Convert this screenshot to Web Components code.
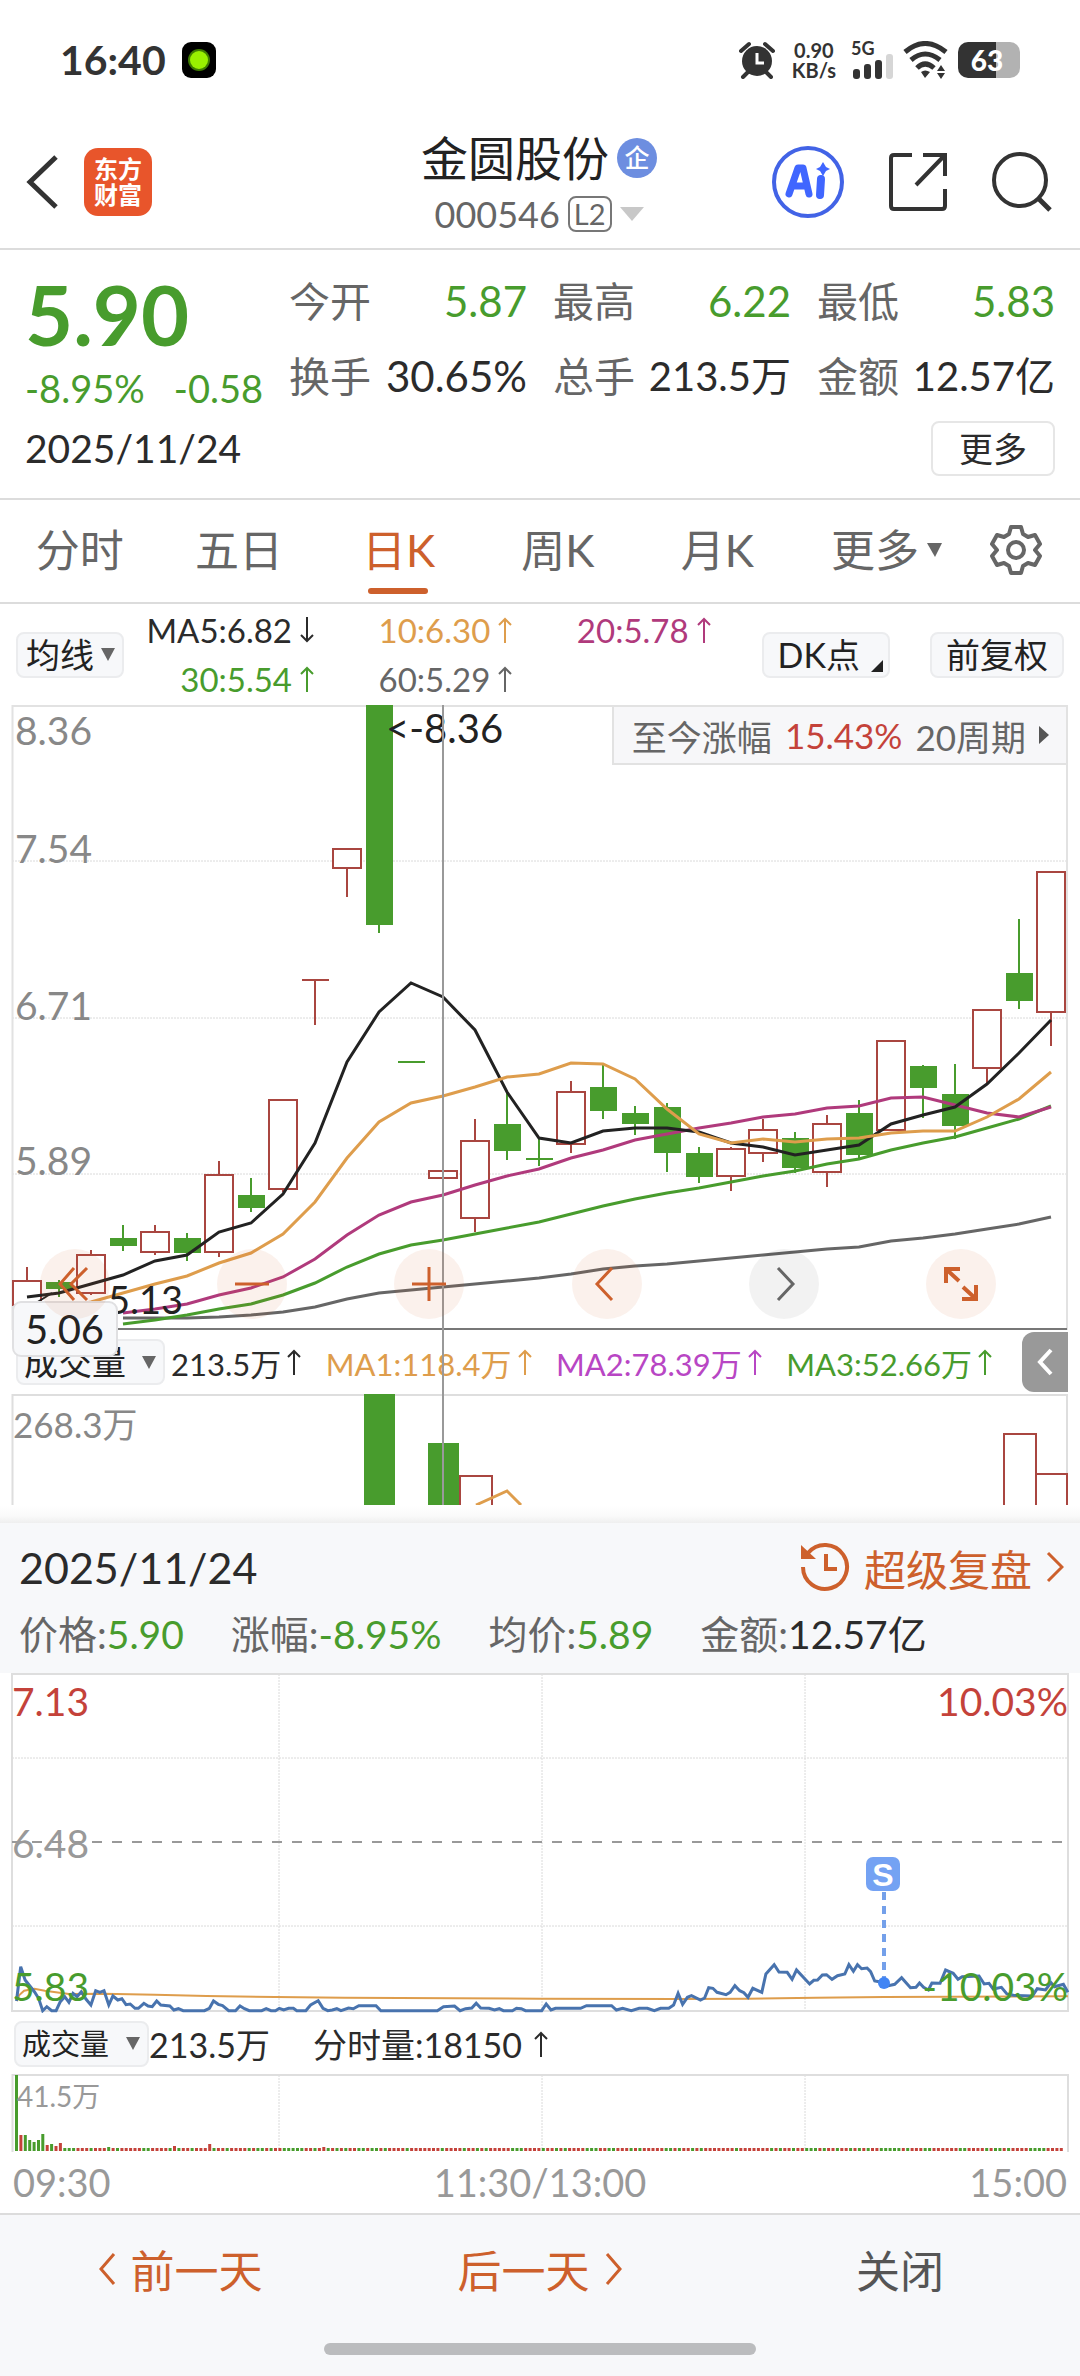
<!DOCTYPE html>
<html lang="zh-CN">
<head>
<meta charset="utf-8">
<meta name="viewport" content="width=device-width, initial-scale=1">
<title>金圆股份 000546</title>
<style>
  :root {
    --up: #c4423a;
    --candle-up: #a94640;
    --down: #489c2d;
    --accent: #cd602c;
    --ink: #2b2b2b;
    --muted: #666;
    --faint: #888;
    --pale: #999;
    --rule: #dcdcdc;
    --chip: #f7f8fa;
    --ma10: #de9d4c;
    --ma20: #b03a7c;
    --violet: #b846c4;
  }
  body {
    margin: 0;
    background: #fff;
    color: var(--ink);
    font-family: Lato, "Noto Sans CJK SC", sans-serif;
    font-size: 40px;
  }
</style>
</head>
<body>
<stock-app></stock-app>

<script>
const BASE = `
  :host, *, *::before, *::after { box-sizing: border-box; }
  button, select, a {
    font: inherit; color: inherit; background: none; border: 0; margin: 0; padding: 0;
    text-decoration: none; appearance: none; cursor: pointer; white-space: nowrap;
  }
  svg { display: block; }
`;
function define(name, markup, setup) {
  const template = document.createElement('template');
  template.innerHTML = markup;
  customElements.define(name, class extends HTMLElement {
    constructor() {
      super();
      this.attachShadow({ mode: 'open' }).append(template.content.cloneNode(true));
    }
    connectedCallback() { if (setup) setup(this.shadowRoot, this); }
  });
}

/* ---------- status bar ---------- */
define('status-bar', `
<style>${BASE}
  :host { display: flex; align-items: center; justify-content: space-between; height: 120px; padding: 0 60px; color: #333; }
  .side { display: flex; align-items: center; }
  time { font-size: 41px; line-height: 48px; font-weight: 700; margin-right: 16px; }
  .rate { font-size: 20px; line-height: 20px; font-weight: 700; text-align: center; margin: 0 15px 0 17px; }
  .cell { font-size: 18px; line-height: 14px; font-weight: 700; margin-right: 10px; }
  .cell svg { margin: -1px 0 0 2px; }
  .battery {
    width: 62px; height: 36px; line-height: 36px; border-radius: 10px; margin-left: 9px; padding-right: 4px;
    background: linear-gradient(90deg, #333 61%, #b2b2b2 61%);
    color: #fff; font-size: 28px; font-weight: 900; text-align: center;
  }
</style>
<div class="side">
  <time>16:40</time>
  <svg width="34" height="36" viewBox="0 0 34 36"><rect width="34" height="36" rx="9" fill="#000"/><circle cx="17" cy="18" r="11" fill="#3f7d00"/><circle cx="17" cy="18" r="9" fill="#99f000"/></svg>
</div>
<div class="side">
  <svg width="36" height="38" viewBox="0 0 36 38"><circle cx="18" cy="20" r="15" fill="#333"/><path d="M2 10 L10 3 M34 10 L26 3 M4 36 L9 31 M32 36 L27 31" stroke="#333" stroke-width="4" stroke-linecap="round"/><path d="M18 12 V22 H25" fill="none" stroke="#fff" stroke-width="3"/></svg>
  <div class="rate">0.90<br>KB/s</div>
  <div class="cell">5G
    <svg width="40" height="25" viewBox="0 0 40 25"><g fill="#333"><rect x="0" y="15" width="7" height="10" rx="3"/><rect x="11" y="10" width="7" height="15" rx="3"/><rect x="22" y="6" width="7" height="19" rx="3"/></g><rect x="33" y="0" width="7" height="25" rx="3" fill="#d6d6d6"/></svg>
  </div>
  <svg width="46" height="38" viewBox="0 0 46 38"><g fill="none" stroke="#333" stroke-width="5"><path d="M2 11 Q22 -6 43 11"/><path d="M8 19 Q22 7 37 19"/><path d="M14 27 Q22 19 31 27"/></g><path d="M18 31 Q22 28 27 31 L22 37Z M34 30 L38 24 L42 30Z M34 32 L38 38 L42 32Z" fill="#333"/></svg>
  <div class="battery">63</div>
</div>`);

/* ---------- top navigation ---------- */
define('top-nav', `
<style>${BASE}
  :host { display: grid; grid-template-columns: 1fr auto 1fr; align-items: center; height: 130px; padding: 0 28px 5px 26px; border-bottom: 2px solid var(--rule); }
  .left, .right { display: flex; align-items: center; }
  .left { gap: 24px; }
  .right { justify-content: flex-end; gap: 44px; }
  .brand { width: 68px; height: 68px; padding: 8px 0; border-radius: 14px; background: #e8552b; color: #fff; font-size: 24px; line-height: 26px; font-weight: 700; text-align: center; }
  .name { display: flex; align-items: center; justify-content: center; gap: 8px; font-size: 47px; line-height: 64px; color: #222; }
  .tag { width: 40px; height: 40px; border-radius: 50%; background: #6d8ee0; color: #fff; font-size: 25px; line-height: 38px; font-weight: 500; text-align: center; }
  .code { display: flex; align-items: center; justify-content: center; gap: 8px; font-size: 36px; line-height: 48px; color: var(--muted); }
  .level { border: 2px solid #777; border-radius: 8px; padding: 0 4px; font-size: 29px; line-height: 32px; }
</style>
<div class="left">
  <button aria-label="返回"><svg width="34" height="56" viewBox="0 0 34 56"><path d="M30 3 L4 28 L30 53" fill="none" stroke="#333" stroke-width="5"/></svg></button>
  <div class="brand">东方<br>财富</div>
</div>
<div>
  <div class="name"><span>金圆股份</span><span class="tag">企</span></div>
  <div class="code"><span>000546</span><span class="level">L2</span><svg width="24" height="14" viewBox="0 0 24 14"><path d="M0 0H24L12 14Z" fill="#c8c8c8"/></svg></div>
</div>
<div class="right">
  <button aria-label="Ai"><svg width="72" height="72" viewBox="0 0 72 72"><circle cx="36" cy="36" r="34" fill="none" stroke="#4263e6" stroke-width="4"/><path d="M17 48 L26 22 H31 L37 48 M21 40 H33" fill="none" stroke="#4066ff" stroke-width="7" stroke-linejoin="round" stroke-linecap="round"/><path d="M49 33 L48 49" stroke="#4066ff" stroke-width="8" stroke-linecap="round"/><path d="M51 16 L54 21 L58 23 L54 25 L51 30 L48 25 L44 23 L48 21Z" fill="#4066ff"/></svg></button>
  <button aria-label="分享"><svg width="60" height="60" viewBox="0 0 60 60"><path d="M24 3 H6 Q3 3 3 6 V54 Q3 57 6 57 H54 Q57 57 57 54 V37 M35 3 H57 V24 M56 4 L28 33" fill="none" stroke="#333" stroke-width="4"/></svg></button>
  <button aria-label="搜索"><svg width="60" height="60" viewBox="0 0 60 60"><circle cx="28" cy="28" r="26" fill="none" stroke="#333" stroke-width="4"/><path d="M46 46 L58 58" stroke="#333" stroke-width="5"/></svg></button>
</div>`);

/* ---------- quote ---------- */
define('quote-item', `
<style>${BASE}
  :host { display: flex; justify-content: space-between; white-space: nowrap; color: var(--ink); line-height: 75px; font-size: 42px; }
  :host([tone="down"]) { color: var(--down); }
  :host([compact]) { font-size: 40px; }
  .label { color: var(--muted); font-size: 41px; }
</style>
<span class="label"></span><span><slot></slot></span>`,
  (root, host) => { root.querySelector('.label').textContent = host.getAttribute('label'); });

define('quote-panel', `
<style>${BASE}
  :host { display: block; padding: 14px 25px 16px; border-bottom: 2px solid var(--rule); }
  .grid { display: grid; grid-template-columns: repeat(4, 1fr); grid-auto-rows: 75px; column-gap: 26px; }
  .main { grid-row: span 2; color: var(--down); }
  .price { font-size: 83px; line-height: 84px; font-weight: 700; padding-top: 8px; }
  .change { display: flex; justify-content: space-between; font-size: 38px; line-height: 64px; }
  .foot { display: flex; justify-content: space-between; align-items: center; height: 68px; font-size: 39px; }
  button { border: 2px solid #e6e6e6; border-radius: 8px; width: 124px; font-size: 34px; line-height: 51px; }
</style>
<div class="grid">
  <div class="main">
    <div class="price">5.90</div>
    <div class="change"><span>-8.95%</span><span>-0.58</span></div>
  </div>
  <quote-item label="今开" tone="down">5.87</quote-item>
  <quote-item label="最高" tone="down">6.22</quote-item>
  <quote-item label="最低" tone="down">5.83</quote-item>
  <quote-item label="换手">30.65%</quote-item>
  <quote-item label="总手" compact>213.5万</quote-item>
  <quote-item label="金额" compact>12.57亿</quote-item>
</div>
<div class="foot"><span>2025/11/24</span><button>更多</button></div>`);

/* ---------- period tabs ---------- */
define('period-tabs', `
<style>${BASE}
  :host { display: flex; height: 104px; border-bottom: 2px solid var(--rule); padding-right: 24px; color: var(--muted); font-size: 44px; }
  button { flex: 16 1 0; position: relative; line-height: 64px; padding-bottom: 2px; }
  button[aria-selected="true"] { color: var(--accent); }
  button[aria-selected="true"]::after { content: ""; position: absolute; left: 50%; bottom: 8px; width: 60px; height: 6px; margin-left: -30px; border-radius: 3px; background: var(--accent); }
  .more { flex-grow: 18; display: flex; align-items: center; justify-content: center; gap: 8px; }
  .gear { flex-grow: 8; display: flex; align-items: center; justify-content: center; }
</style>
<button role="tab">分时</button>
<button role="tab">五日</button>
<button role="tab" aria-selected="true">日K</button>
<button role="tab">周K</button>
<button role="tab">月K</button>
<button class="more">更多<svg width="15" height="14" viewBox="0 0 15 14"><path d="M0 0H15L8 14Z" fill="#666"/></svg></button>
<button class="gear" aria-label="设置"><svg width="52" height="52" viewBox="0 0 52 52"><g fill="none" stroke="#666" stroke-width="4" stroke-linejoin="round"><path d="M21 3 H31 L33 10 L38 13 L45 11 L50 20 L45 26 L50 32 L45 41 L38 39 L33 42 L31 49 H21 L19 42 L14 39 L7 41 L2 32 L7 26 L2 20 L7 11 L14 13 L19 10Z"/><circle cx="26" cy="26" r="8"/></g></svg></button>`);

/* ---------- drop-down chip ---------- */
define('chip-select', `
<style>${BASE}
  :host { display: inline-grid; flex: none; font-size: var(--chip-size, 34px); }
  select { grid-area: 1 / 1; height: 46px; line-height: 42px; padding: 0 37px 0 6px; border: 2px solid #ebecee; border-radius: 8px; background: var(--chip); color: #222; }
  :host([tight]) select { padding: 0 28px 0 8px; }
  svg { grid-area: 1 / 1; align-self: center; justify-self: end; margin-right: 9px; pointer-events: none; }
</style>
<select></select>
<svg width="14" height="13" viewBox="0 0 14 13"><path d="M0 0H14L7 13Z" fill="#666"/></svg>`,
  (root, host) => {
    const select = root.querySelector('select');
    select.setAttribute('aria-label', host.getAttribute('name'));
    select.innerHTML = `<option>${host.getAttribute('value')}</option>`;
  });

/* ---------- indicator reading with trend arrow ---------- */
define('trend-value', `
<style>${BASE}
  :host { display: inline-flex; align-items: center; justify-content: flex-end; gap: 8px; white-space: nowrap; }
  svg { flex: none; }
  :host([dir-down]) svg { rotate: 180deg; }
</style>
<span><slot></slot></span><svg width="14" height="26" viewBox="0 0 14 26"><path d="M7 26 V2 M1 8 L7 2 L13 8" fill="none" stroke="currentColor" stroke-width="2"/></svg>`);

define('ma-legend', `
<style>${BASE}
  :host { display: flex; align-items: center; height: 101px; padding: 0 16px; font-size: 33px; }
  .values { display: grid; grid-template-columns: 190px 1fr 1fr; flex: 1; line-height: 49px; margin-right: 51px; }
  .buttons { display: flex; gap: 40px; }
  button { position: relative; height: 46px; line-height: 42px; border: 2px solid #ebecee; border-radius: 8px; background: var(--chip); color: #222; font-size: 34px; padding: 0 14px; }
  .dk { padding-right: 28px; }
  .dk svg { position: absolute; right: 5px; bottom: 4px; }
</style>
<chip-select tight name="指标" value="均线"></chip-select>
<div class="values">
  <trend-value dir-down>MA5:6.82</trend-value>
  <trend-value style="color:var(--ma10)">10:6.30</trend-value>
  <trend-value style="color:var(--ma20)">20:5.78</trend-value>
  <trend-value style="color:var(--down)">30:5.54</trend-value>
  <trend-value style="color:var(--muted)">60:5.29</trend-value>
</div>
<div class="buttons">
  <button class="dk">DK点<svg width="12" height="12" viewBox="0 0 12 12"><path d="M12 0V12H0Z" fill="#222"/></svg></button>
  <button>前复权</button>
</div>`);

/* ---------- daily candles ---------- */
// [kind, body top, body bottom, high, low]
const CANDLES = [
  ['u',1281,1305,1267,1305],['d',1282,1289,1280,1297],['u',1255,1293,1250,1295],['d',1238,1246,1225,1251],
  ['u',1232,1252,1225,1255],['d',1238,1253,1233,1261],['u',1175,1252,1161,1257],['d',1195,1208,1178,1212],
  ['u',1100,1189,1100,1192],['T',980,980,980,1025],['u',849,868,849,897],['d',705,925,705,933],
  ['t',1062,1062,1062,1062],['u',1171,1178,1111,1185],['u',1141,1218,1119,1232],['d',1124,1151,1092,1160],
  ['t',1159,1159,1139,1166],['u',1092,1144,1081,1153],['d',1087,1111,1064,1119],['d',1113,1124,1106,1135],
  ['d',1107,1153,1103,1172],['d',1153,1177,1147,1183],['u',1149,1176,1147,1191],['u',1130,1153,1119,1162],
  ['d',1138,1168,1132,1173],['u',1124,1172,1115,1187],['d',1113,1155,1100,1158],['u',1041,1130,1041,1130],
  ['d',1066,1088,1065,1118],['d',1094,1126,1064,1139],['u',1010,1068,1010,1083],['d',973,1001,919,1009],
  ['u',872,1012,872,1046]
];
const AVERAGES = [
  ['#666',3,[1318,1318,1318,1317,1315,1312,1307,1299,1293,1290,1287,1284,1281,1278,1274,1269,1266,1264,1261,1258,1255,1252,1249,1247,1241,1238,1234,1229,1224,1217]],
  ['var(--down)',3,[1324,1320,1315,1309,1304,1295,1283,1267,1254,1245,1240,1234,1228,1222,1214,1206,1199,1193,1188,1182,1176,1171,1164,1159,1150,1143,1137,1128,1119,1106]],
  ['var(--ma20)',3,[1313,1309,1304,1295,1288,1277,1259,1235,1215,1202,1195,1185,1176,1169,1158,1150,1140,1134,1128,1123,1117,1114,1108,1106,1098,1097,1105,1113,1117,1107]],
  ['#222',0,[1297,1293,1284,1275,1261,1255,1232,1223,1194,1143,1062,1012,983,997,1030,1092,1138,1143,1131,1128,1128,1132,1143,1147,1155,1150,1145,1124,1115,1107,1084,1053,1020]],
  ['var(--ma10)',1,[1308,1302,1293,1284,1276,1263,1253,1234,1202,1158,1122,1103,1096,1087,1077,1074,1063,1064,1079,1109,1134,1143,1139,1142,1139,1138,1133,1131,1131,1117,1099,1072]]
];
const slotX = i => 27 + 32 * i;

function candleMarks() {
  return CANDLES.map(([kind, top, bottom, high, low], i) => {
    const x = slotX(i), ink = kind === 'u' || kind === 'T' ? 'var(--candle-up)' : 'var(--down)';
    let out = '';
    if (high < top) out += `<path d="M${x} ${high}V${top}" stroke="${ink}" stroke-width="2"/>`;
    if (low > bottom) out += `<path d="M${x} ${bottom}V${low}" stroke="${ink}" stroke-width="2"/>`;
    if (kind === 'u') out += `<rect x="${x - 14}" y="${top}" width="28" height="${bottom - top}" fill="#fff" stroke="${ink}" stroke-width="2"/>`;
    else if (kind === 'd') out += `<rect x="${x - 13}" y="${top}" width="27" height="${bottom - top}" fill="${ink}"/>`;
    else out += `<path d="M${x - 13} ${top}H${x + 14}" stroke="${ink}" stroke-width="2"/>`;
    return out;
  }).join('');
}
const averageLines = () => AVERAGES.map(([ink, start, ys]) =>
  `<polyline fill="none" stroke="${ink}" stroke-width="3" points="${ys.map((y, k) => slotX(start + k) + ',' + y).join(' ')}"/>`).join('');

define('k-chart', `
<style>${BASE}
  :host { display: block; position: relative; z-index: 1; pointer-events: none; }
  button { pointer-events: auto; }
  .plot { width: 100%; overflow: visible; }
  text { font-size: 39px; fill: var(--faint); }
  text.note { font-size: 40px; fill: #222; }
  text.low { font-size: 38px; }
  .gain { position: absolute; top: 0; right: 12px; display: flex; align-items: center; gap: 13px; height: 60px; padding: 0 17px 0 18px; border: 2px solid #e2e2e2; background: #f7f7f9; color: var(--muted); font-size: 35px; }
  .gain b { font-weight: 400; color: var(--up); }
  .tools { position: absolute; left: 40px; right: 84px; bottom: 11px; display: flex; justify-content: space-between; }
  .tools button { width: 70px; height: 70px; border-radius: 50%; background: rgba(211, 96, 42, .09); display: grid; place-items: center; color: var(--accent); }
  .tools .off { background: rgba(0, 0, 0, .05); color: #666; }
  .tools svg { width: 36px; height: 36px; fill: none; stroke: currentColor; stroke-width: 3; }
</style>
<svg class="plot" viewBox="0 705 1080 625" role="img" aria-label="日K线">
  <path d="M12 861H1067M12 1018H1067M12 1174H1067" stroke="#dadada" stroke-dasharray="2 1" fill="none"/>
  <path d="M12.5 1330V706H1067V1330" fill="none" stroke="#e2e2e2" stroke-width="2"/>
  <path d="M12 1329H1067" stroke="#777" stroke-width="2"/>
  ${candleMarks()}
  <text x="15" y="745">8.36</text><text x="15" y="863">7.54</text><text x="15" y="1020">6.71</text><text x="15" y="1175">5.89</text>
  ${averageLines()}
  <path d="M36 1303 L52 1293" stroke="#222" stroke-width="2"/>
  <text class="note low" x="108" y="1314">5.13</text>
  <text class="note" x="386" y="743">&lt;-8.36</text>
  <path d="M443 705V1505" stroke="#999" stroke-width="2"/>
  <rect x="13" y="1302" width="104" height="54" rx="8" fill="#f7f8fa" stroke="#e0e0e2" stroke-width="2"/>
  <text class="note" x="25" y="1344">5.06</text>
</svg>
<button class="gain"><span>至今涨幅</span><b>15.43%</b><span>20周期</span><svg width="10" height="18" viewBox="0 0 10 18"><path d="M0 0L10 9L0 18Z" fill="#555"/></svg></button>
<div class="tools">
  <button aria-label="向前翻页"><svg viewBox="0 0 36 36"><path d="M17 2 L3 18 L17 34 M30 2 L14 18 L30 34"/></svg></button>
  <button aria-label="缩小"><svg viewBox="0 0 36 36"><path d="M1 18 H35"/></svg></button>
  <button aria-label="放大"><svg viewBox="0 0 36 36"><path d="M1 18 H35 M18 1 V35"/></svg></button>
  <button aria-label="左移"><svg viewBox="0 0 36 36"><path d="M23 2 L8 18 L23 34"/></svg></button>
  <button class="off" aria-label="右移"><svg viewBox="0 0 36 36"><path d="M12 2 L27 18 L12 34"/></svg></button>
  <button aria-label="全屏"><svg viewBox="0 0 36 36"><path d="M3 17 V3 H17 M3 3 L16 15 M33 19 V33 H19 M33 33 L20 21" stroke-width="4"/></svg></button>
</div>`);

/* ---------- volume below the candles ---------- */
define('volume-panel', `
<style>${BASE}
  :host { display: block; }
  .head { display: flex; align-items: center; height: 64px; padding-left: 16px; }
  .readings { flex: 1; display: flex; justify-content: space-between; padding: 0 30px 0 6px; font-size: 31px; }
  trend-value { gap: 6px; }
  .fold { flex: none; width: 46px; height: 60px; margin-right: 12px; border-radius: 12px 0 0 12px; background: #999; display: grid; place-items: center; }
  .plot { width: 100%; }
  text { font-size: 35px; fill: var(--faint); }
</style>
<div class="head">
  <chip-select name="副图指标" value="成交量"></chip-select>
  <div class="readings">
    <trend-value>213.5万</trend-value>
    <trend-value style="color:var(--ma10)">MA1:118.4万</trend-value>
    <trend-value style="color:var(--violet)">MA2:78.39万</trend-value>
    <trend-value style="color:var(--down)">MA3:52.66万</trend-value>
  </div>
  <button class="fold" aria-label="展开"><svg width="16" height="28" viewBox="0 0 16 28"><path d="M14 2 L3 14 L14 26" fill="none" stroke="#fff" stroke-width="4"/></svg></button>
</div>
<svg class="plot" viewBox="0 1394 1080 111" role="img" aria-label="成交量">
  <path d="M12.5 1505V1395H1067V1505" fill="none" stroke="#dedede" stroke-width="2"/>
  <g fill="var(--down)"><rect x="364" y="1394" width="31" height="111"/><rect x="428" y="1443" width="31" height="62"/></g>
  <path d="M460 1505V1476H492V1505M1004 1505V1434H1036V1505M1036 1474H1067V1505" fill="none" stroke="var(--candle-up)" stroke-width="2"/>
  <path d="M476 1505L507 1491L521 1505" fill="none" stroke="var(--ma10)" stroke-width="3"/>
  <text x="13" y="1438">268.3万</text>
</svg>`);

/* ---------- replay sheet ---------- */
define('stat-pair', `
<style>${BASE}
  :host { display: inline-block; color: var(--down); white-space: nowrap; }
  :host([tone="plain"]) { color: var(--ink); }
  .label { color: var(--muted); }
</style><span class="label"></span><slot></slot>`,
  (root, host) => { root.querySelector('.label').textContent = host.getAttribute('label') + ':'; });

define('replay-header', `
<style>${BASE}
  :host { display: block; }
  .shade { height: 18px; background: linear-gradient(#fff, #fafafa 60%, #efefef); }
  .box { background: var(--chip); height: 150px; padding: 9px 16px 0 19px; }
  .top { display: flex; justify-content: space-between; align-items: center; height: 70px; font-size: 43px; }
  a { display: flex; align-items: center; gap: 14px; color: var(--accent); font-size: 42px; }
  .stats { display: flex; gap: 47px; font-size: 39px; line-height: 64px; }
</style>
<div class="shade"></div>
<div class="box">
  <div class="top"><span>2025/11/24</span>
    <a href="#replay"><svg width="50" height="50" viewBox="0 0 50 50"><g fill="none" stroke="currentColor" stroke-width="4"><path d="M3 25 A22 22 0 1 0 8 11"/><path d="M26 12 V27 H37"/></g><path d="M1 3 L16 17 H1Z" fill="currentColor"/></svg>
    <span>超级复盘</span><svg width="18" height="32" viewBox="0 0 18 32"><path d="M2 2 L16 16 L2 30" fill="none" stroke="currentColor" stroke-width="3"/></svg></a>
  </div>
  <div class="stats">
    <stat-pair label="价格">5.90</stat-pair>
    <stat-pair label="涨幅">-8.95%</stat-pair>
    <stat-pair label="均价">5.89</stat-pair>
    <stat-pair label="金额" tone="plain">12.57亿</stat-pair>
  </div>
</div>`);

/* ---------- intraday chart ---------- */
// Samples are stored at roughly three units a pixel, morning and afternoon separately.
const MORNING = '48,603 60,500 73,540 100,575 112,595 124,632 136,620 150,632 163,632 175,605 188,590 200,607 212,580 224,590 236,575 250,598 264,615 278,572 290,577 302,572 316,615 328,588 342,600 354,596 366,614 378,612 392,625 402,625 418,610 430,618 442,620 455,603 467,615 493,618 505,630 518,626 532,632 594,632 608,625 620,603 634,613 646,617 664,632 684,632 697,618 710,626 724,632 760,632 773,626 787,632 800,632 811,625 824,630 838,625 852,625 862,632 888,632 902,615 924,602 938,625 952,632 965,630 978,626 990,632 1012,624 1026,626 1042,617 1092,617 1106,632 1270,632 1288,620 1320,618 1336,632 1352,626 1370,624 1383,610 1396,624 1420,625 1436,630 1450,626 1462,632 1488,632 1500,625 1514,626 1526,632 1568,632';
const AFTERNOON = '5,632 18,612 32,630 45,625 118,625 135,617 208,617 222,630 240,625 265,632 288,625 312,625 332,632 350,625 374,625 388,615 401,580 414,613 428,592 440,587 466,600 478,594 490,563 502,565 514,577 540,584 552,577 566,557 580,572 592,578 604,592 618,565 644,577 656,522 680,494 694,516 718,517 732,538 745,510 783,552 795,541 806,540 820,525 832,524 848,538 864,527 885,522 897,494 910,514 922,494 934,506 950,504 960,515 972,543 985,545 1000,560 1030,553 1050,533 1076,563 1092,562 1102,549 1114,562 1128,570 1138,549 1162,550 1178,510 1200,520 1214,538 1226,530 1275,528 1290,552 1304,550 1316,567 1340,562 1356,582 1375,586 1430,588 1444,566 1468,570 1484,548 1494,560 1520,553 1533,577';
const AVG_AM = '48,603 56,585 70,572 100,566 130,572 200,582 300,581 450,584 600,588 800,591 1000,593 1568,596';
const AVG_PM = '0,596 400,597 600,596 800,593 1000,591 1533,589';
const toPlot = (text, offset) => text.split(' ').map(pair => {
  const [x, y] = pair.split(',').map(Number);
  return (x / 2.904 + offset).toFixed(1) + ',' + (1800 + y / 3).toFixed(1);
}).join(' ');

define('minute-chart', `
<style>${BASE}
  :host { display: block; }
  .plot { width: 100%; }
  text { font-size: 39px; }
  text.mark { font: 700 32px "Liberation Sans", sans-serif; }
</style>
<svg class="plot" viewBox="0 1673 1080 340" role="img" aria-label="分时走势">
  <path d="M279 1674V2011M542 1674V2011M805 1674V2011M12 1758H1068M12 1926H1068" stroke="#dadada" stroke-dasharray="2 1" fill="none"/>
  <rect x="12" y="1674" width="1056" height="337" fill="none" stroke="#dedede" stroke-width="2"/>
  <path d="M12 1842H1064" stroke="#999" stroke-width="2" stroke-dasharray="10 10"/>
  <polyline points="${toPlot(AVG_AM, 0)} ${toPlot(AVG_PM, 540)}" fill="none" stroke="var(--ma10)" stroke-width="2"/>
  <polyline points="${toPlot(MORNING, 0)} ${toPlot(AFTERNOON, 540)}" fill="none" stroke="#4873ae" stroke-width="3"/>
  <text x="12" y="1716" fill="var(--up)">7.13</text>
  <text x="1068" y="1716" text-anchor="end" fill="var(--up)">10.03%</text>
  <text x="12" y="1858" fill="var(--pale)">6.48</text>
  <text x="12" y="2001" fill="var(--down)">5.83</text>
  <text x="1068" y="2001" text-anchor="end" fill="var(--down)">-10.03%</text>
  <path d="M884 1892V1980" stroke="#74a0ea" stroke-width="4" stroke-dasharray="8 6"/>
  <circle cx="884" cy="1983" r="6" fill="#4285f4"/>
  <rect x="866" y="1857" width="34" height="34" rx="7" fill="#74a2f3"/>
  <text class="mark" x="883" y="1886" text-anchor="middle" fill="#fff">S</text>
</svg>`);

const HEAD_BARS = [['d',76],['u',16],['d',16],['d',11],['d',9],['d',11],['d',17],['u',6],['d',7],['u',5],['u',8]];
const SPIKES = { 21: 4, 36: 5, 44: 7, 70: 4 };
const TONES = 'uddududduuduuuududuuduuudduuduuuduuuududuudduuuduuudu';
function minuteBars() {
  let out = '';
  for (let i = 0; i < 239; i++) {
    const [tone, h] = HEAD_BARS[i] || [i === 44 ? 'u' : TONES[(i * 7 + (i >> 3)) % TONES.length], SPIKES[i] || 3];
    out += `<rect x="${(15 + i * 4.39).toFixed(1)}" y="${2151 - h}" width="3" height="${h}" fill="var(--${tone === 'u' ? 'up' : 'down'})"/>`;
  }
  return out;
}
define('minute-volume', `
<style>${BASE}
  :host { display: block; }
  .head { display: flex; align-items: center; height: 61px; padding-left: 14px; font-size: 34px; --chip-size: 29px; }
  .total { margin-right: 43px; }
  trend-value { gap: 12px; }
  .plot { width: 100%; }
  text { font-size: 28px; fill: var(--pale); }
  .times { display: grid; grid-template-columns: 1fr auto 1fr; padding: 0 13px; height: 61px; line-height: 61px; font-size: 38px; color: var(--pale); }
  .times :last-child { text-align: right; }
</style>
<div class="head">
  <chip-select name="分时副图" value="成交量"></chip-select>
  <span class="total">213.5万</span>
  <trend-value>分时量:18150</trend-value>
</div>
<svg class="plot" viewBox="0 2074 1080 78" role="img" aria-label="分时成交量">
  <path d="M279 2075V2151M542 2075V2151M805 2075V2151" stroke="#dadada" stroke-dasharray="2 1"/>
  <path d="M12.5 2152V2075H1068V2152" fill="none" stroke="#dedede" stroke-width="2"/>
  ${minuteBars()}
  <text x="17" y="2107">41.5万</text>
</svg>
<div class="times"><span>09:30</span><span>11:30/13:00</span><span>15:00</span></div>`);

/* ---------- bottom bar ---------- */
define('day-switcher', `
<style>${BASE}
  :host { display: block; background: var(--chip); border-top: 2px solid var(--rule); padding-bottom: 21px; }
  nav { display: grid; grid-template-columns: repeat(3, 1fr); height: 128px; padding-bottom: 20px; font-size: 44px; }
  button { display: flex; align-items: center; justify-content: center; gap: 15px; color: var(--accent); }
  .close { color: #555; }
  .home { width: 40%; height: 12px; margin: 0 auto; border-radius: 6px; background: #bbbcbe; }
</style>
<nav>
  <button><svg width="18" height="34" viewBox="0 0 18 34"><path d="M16 2 L3 17 L16 32" fill="none" stroke="currentColor" stroke-width="3"/></svg>前一天</button>
  <button>后一天<svg width="18" height="34" viewBox="0 0 18 34"><path d="M2 2 L15 17 L2 32" fill="none" stroke="currentColor" stroke-width="3"/></svg></button>
  <button class="close">关闭</button>
</nav>
<div class="home"></div>`);

define('stock-app', `
<style>:host { display: block; }</style>
<status-bar></status-bar>
<top-nav></top-nav>
<quote-panel></quote-panel>
<period-tabs></period-tabs>
<ma-legend></ma-legend>
<k-chart></k-chart>
<volume-panel></volume-panel>
<replay-header></replay-header>
<minute-chart></minute-chart>
<minute-volume></minute-volume>
<day-switcher></day-switcher>`);
</script>
</body>
</html>
